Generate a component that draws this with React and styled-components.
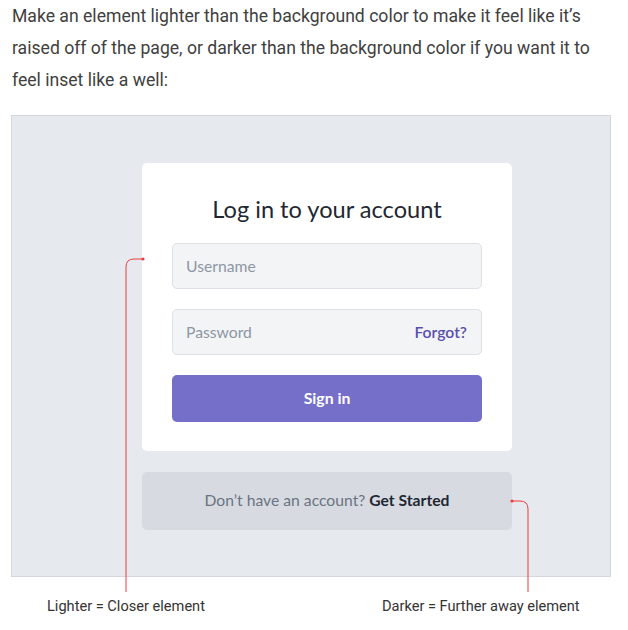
import React from "react";
import styled, { createGlobalStyle } from "styled-components";

const GlobalStyle = createGlobalStyle`
  body {
    margin: 0;
    background: #ffffff;
    font-family: Roboto, "Liberation Sans", sans-serif;
  }
`;

const Page = styled.div`
  width: 628px;
  height: 630px;
  overflow: hidden;
`;

const Intro = styled.p`
  margin: 0 0 19px;
  padding: 0 12px;
  font-size: 17.6px;
  line-height: 32px;
  color: #404040;
`;

const Figure = styled.div`
  position: relative;
`;

const Stage = styled.div`
  box-sizing: border-box;
  width: 600px;
  margin-left: 11px;
  padding: 47px 98px 46px 130px;
  background: #e6e9ee;
  border: 1px solid #d3d6db;
  font-family: Lato, "Noto Sans", sans-serif;
`;

const Card = styled.div`
  background: #ffffff;
  border-radius: 5px;
  padding: 30px 30px 29px;
  display: flex;
  flex-direction: column;
  gap: 20px;
`;

const Title = styled.h1`
  margin: -2px 0 -4px;
  font-size: 23.6px;
  line-height: 36px;
  font-weight: 400;
  text-align: center;
  color: #1f2733;
`;

const Field = styled.div`
  box-sizing: border-box;
  height: 46px;
  display: flex;
  align-items: center;
  justify-content: space-between;
  padding: 0 14px 0 13px;
  background: #f3f4f6;
  border: 1px solid #dde0e5;
  border-radius: 5px;
  font-size: 15.7px;
`;

const Placeholder = styled.span`
  color: #8d96a4;
`;

const Forgot = styled.span`
  color: #5a4fae;
  font-weight: 600;
`;

const Button = styled.div`
  box-sizing: border-box;
  height: 47px;
  padding-bottom: 3px;
  display: flex;
  align-items: center;
  justify-content: center;
  background: #766fca;
  border-radius: 5px;
  color: #ffffff;
  font-size: 15.8px;
  font-weight: 700;
`;

const Well = styled.div`
  box-sizing: border-box;
  margin-top: 21px;
  height: 58px;
  padding-bottom: 3px;
  display: flex;
  align-items: center;
  justify-content: center;
  background: #d7dbe1;
  border-radius: 5px;
  font-size: 15.7px;
  color: #6a7381;
`;

const Strong = styled.b`
  margin-left: 4px;
  color: #1f2733;
  font-weight: 700;
`;

const Captions = styled.div`
  display: flex;
  padding: 20px 0 0;
  font-size: 14.6px;
  line-height: 18px;
  color: #333333;
`;

const Caption = styled.span`
  margin-left: ${(p) => p.$left}px;
`;

const Overlay = styled.svg`
  position: absolute;
  left: 0;
  top: 0;
  pointer-events: none;
`;

export default function App() {
  return (
    <Page>
      <GlobalStyle />
      <Intro>
        Make an element lighter than the background color to make it feel like it’s
        raised off of the page, or darker than the background color if you want it to
        feel inset like a well:
      </Intro>
      <Figure>
        <Stage>
          <Card>
            <Title>Log in to your account</Title>
            <Field>
              <Placeholder>Username</Placeholder>
            </Field>
            <Field>
              <Placeholder>Password</Placeholder>
              <Forgot>Forgot?</Forgot>
            </Field>
            <Button>Sign in</Button>
          </Card>
          <Well>
            Don’t have an account?<Strong>Get Started</Strong>
          </Well>
        </Stage>
        <Captions>
          <Caption $left={47}>Lighter = Closer element</Caption>
          <Caption $left={177}>Darker = Further away element</Caption>
        </Captions>
        <Overlay width="628" height="515" viewBox="0 0 628 515">
          <path d="M143 144 H134 Q126 144 126 152 V477" fill="none" stroke="#ef3b3b" strokeWidth="1" />
          <circle cx="143" cy="144" r="1.6" fill="#ef3b3b" />
          <path d="M512 386 H520 Q528 386 528 394 V477" fill="none" stroke="#ef3b3b" strokeWidth="1" />
          <circle cx="512" cy="386" r="1.6" fill="#ef3b3b" />
        </Overlay>
      </Figure>
    </Page>
  );
}
